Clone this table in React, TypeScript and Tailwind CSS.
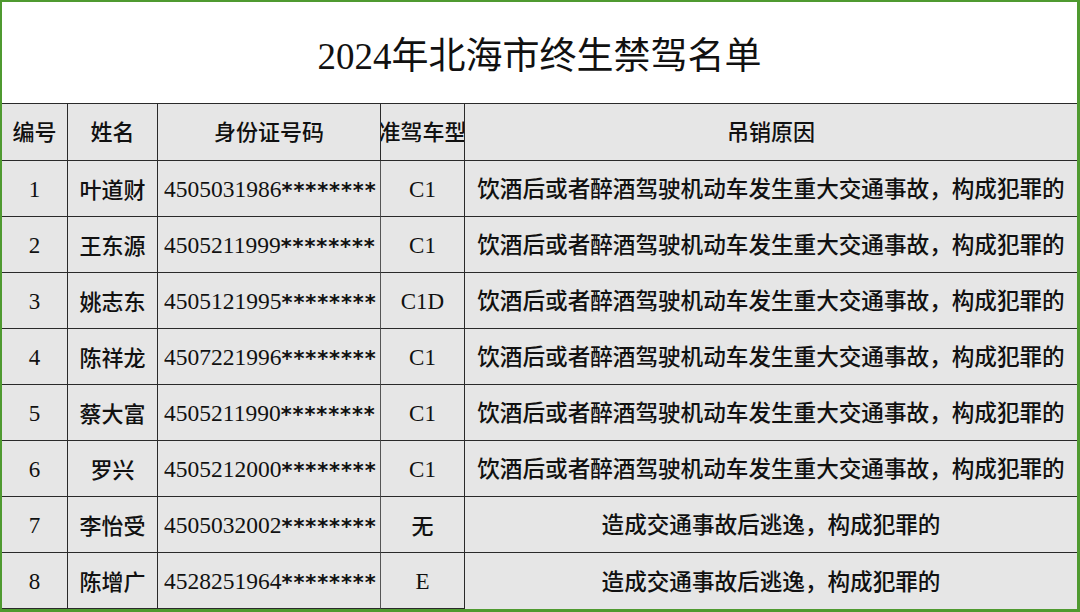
const rows = [
  { no: "1", name: "叶道财", id: "4505031986", type: "C1", reason: "饮酒后或者醉酒驾驶机动车发生重大交通事故，构成犯罪的" },
  { no: "2", name: "王东源", id: "4505211999", type: "C1", reason: "饮酒后或者醉酒驾驶机动车发生重大交通事故，构成犯罪的" },
  { no: "3", name: "姚志东", id: "4505121995", type: "C1D", reason: "饮酒后或者醉酒驾驶机动车发生重大交通事故，构成犯罪的" },
  { no: "4", name: "陈祥龙", id: "4507221996", type: "C1", reason: "饮酒后或者醉酒驾驶机动车发生重大交通事故，构成犯罪的" },
  { no: "5", name: "蔡大富", id: "4505211990", type: "C1", reason: "饮酒后或者醉酒驾驶机动车发生重大交通事故，构成犯罪的" },
  { no: "6", name: "罗兴", id: "4505212000", type: "C1", reason: "饮酒后或者醉酒驾驶机动车发生重大交通事故，构成犯罪的" },
  { no: "7", name: "李怡受", id: "4505032002", type: "无", reason: "造成交通事故后逃逸，构成犯罪的" },
  { no: "8", name: "陈增广", id: "4528251964", type: "E", reason: "造成交通事故后逃逸，构成犯罪的" },
];

const cell =
  "flex items-center justify-center overflow-hidden whitespace-nowrap border-r border-b border-[#2a2a2a]";

export default function App() {
  return (
    <div
      className="w-[1080px] h-[612px] bg-white border-l-2 border-t-2 border-r-[3px] border-b-[3px] border-[#4f9a30] text-[#111] overflow-hidden"
      style={{ fontFamily: '"Liberation Serif", "Noto Sans CJK SC", serif' }}
    >
      <div className="h-[102px] flex items-center justify-center border-b border-[#2a2a2a] text-[37px] pt-2">
        2024年北海市终生禁驾名单
      </div>

      <div className="grid grid-cols-[66px_90px_223px_84px_1fr] bg-[#e6e6e6] text-[22px] font-medium">
        <div className={`${cell} h-[57px]`}>编号</div>
        <div className={`${cell} h-[57px]`}>姓名</div>
        <div className={`${cell} h-[57px]`}>身份证号码</div>
        <div className={`${cell} h-[57px]`}>准驾车型</div>
        <div className={`${cell} h-[57px] border-r-0`}>吊销原因</div>

        {rows.map((r) => (
          <div key={r.no} className="contents">
            <div className={`${cell} h-[56px] text-[23px] font-normal pt-[3px]`}>{r.no}</div>
            <div className={`${cell} h-[56px] pt-[3px]`}>{r.name}</div>
            <div className={`${cell} h-[56px] justify-start pl-[6px] border-r-[#555] font-normal pt-[3px]`}>
              <span className="text-[23.5px]">{r.id}</span>
              <span
                className="text-[21px] font-bold tracking-[0.9px] leading-none translate-y-[1px]"
                style={{ fontFamily: '"DejaVu Sans", sans-serif' }}
              >
                ********
              </span>
            </div>
            <div className={`${cell} h-[56px] pt-[3px] ${r.type === "无" ? "" : "text-[23px] font-normal"}`}>
              {r.type}
            </div>
            <div className={`${cell} h-[56px] border-r-0 text-[22.6px] pt-[3px] ${r.no === "8" ? "border-b-0" : ""}`}>
              {r.reason}
            </div>
          </div>
        ))}
      </div>
    </div>
  );
}
